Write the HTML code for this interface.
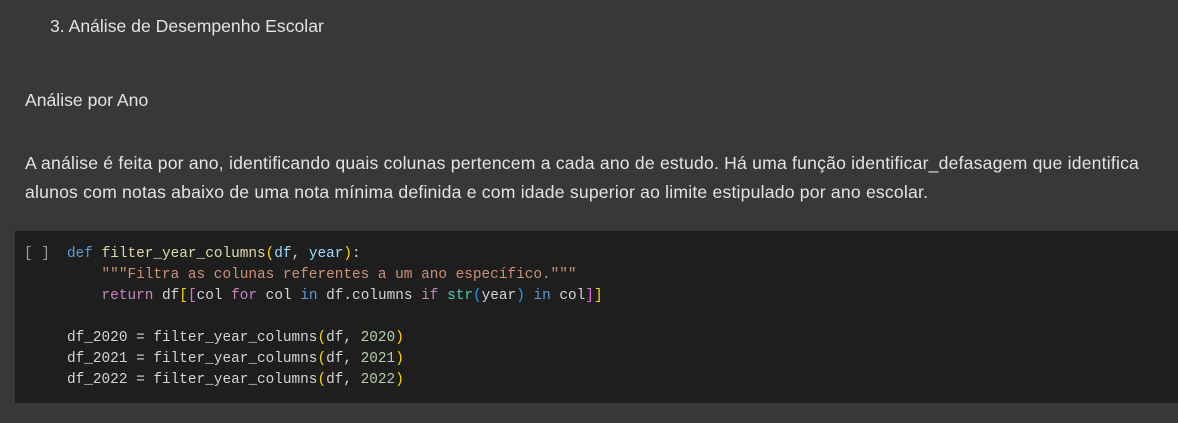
<!DOCTYPE html>
<html><head><meta charset="utf-8"><style>
html,body{margin:0;padding:0;width:1178px;height:423px;background:#383838;overflow:hidden}
body{font-family:"Liberation Sans",sans-serif;color:#e3e3e3;position:relative}
.t{position:absolute;white-space:nowrap;font-size:17.6px}
.code{position:absolute;left:15px;top:231px;width:1163px;height:172px;background:#1e1e1e}
.c{position:absolute;font-family:"Liberation Mono",monospace;font-size:14.4px;white-space:pre;color:#d4d4d4;line-height:21px}
.k{color:#569cd6}.f{color:#dcdcaa}.p{color:#9cdcfe}.s{color:#ce9178}.r{color:#c586c0}.y{color:#ffd700}.m{color:#da70d6}.b{color:#179fff}.n{color:#b5cea8}.g{color:#4ec9b0}
</style></head><body>
<div class="t" style="left:50px;top:16px">3. Análise de Desempenho Escolar</div>
<div class="t" style="left:25px;top:90px">Análise por Ano</div>
<div class="t" style="left:25px;top:149px;line-height:29px;letter-spacing:0.2px">A análise é feita por ano, identificando quais colunas pertencem a cada ano de estudo. Há uma função identificar_defasagem que identifica<br>alunos com notas abaixo de uma nota mínima definida e com idade superior ao limite estipulado por ano escolar.</div>
<div class="code"></div>
<div class="c" style="left:24px;top:244px;color:#999">[ ]</div>
<div class="c" style="left:67px;top:244px"><span class="k">def</span> <span class="f">filter_year_columns</span><span class="y">(</span><span class="p">df</span>, <span class="p">year</span><span class="y">)</span>:
    <span class="s">"""Filtra as colunas referentes a um ano específico."""</span>
    <span class="r">return</span> df<span class="y">[</span><span class="m">[</span>col <span class="r">for</span> col <span class="k">in</span> df.columns <span class="r">if</span> <span class="g">str</span><span class="b">(</span>year<span class="b">)</span> <span class="k">in</span> col<span class="m">]</span><span class="y">]</span>

df_2020 = filter_year_columns<span class="y">(</span>df, <span class="n">2020</span><span class="y">)</span>
df_2021 = filter_year_columns<span class="y">(</span>df, <span class="n">2021</span><span class="y">)</span>
df_2022 = filter_year_columns<span class="y">(</span>df, <span class="n">2022</span><span class="y">)</span></div>
</body></html>
